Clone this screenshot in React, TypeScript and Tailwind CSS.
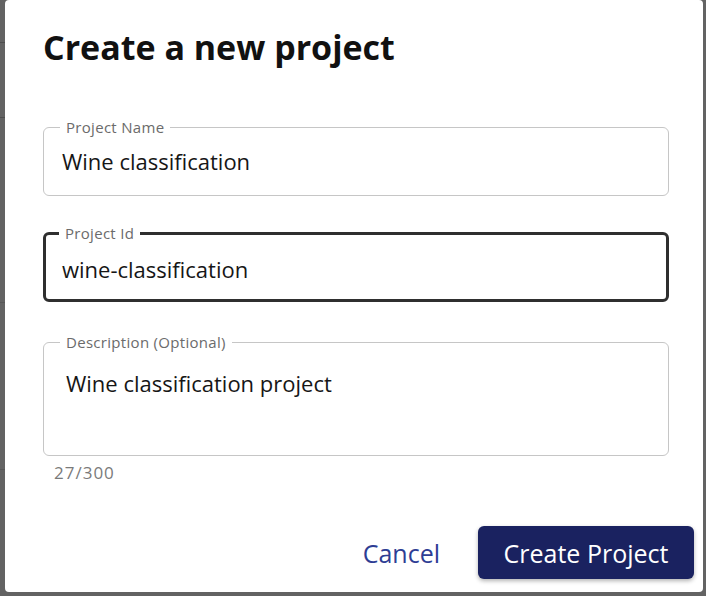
import React from "react";

const font = { fontFamily: "'Open Sans', Lato, sans-serif" };

function Field({
  label,
  value,
  focused,
  tall,
}: {
  label: string;
  value: string;
  focused?: boolean;
  tall?: boolean;
}) {
  return (
    <fieldset
      className={
        "m-0 min-w-0 rounded-[6px] " +
        (focused
          ? "border-[3px] border-[#2f2f2f] px-[16px]"
          : "border border-[#c6c6c6] px-[18px]") +
        (tall ? " h-[122px]" : " h-[77px]")
      }
    >
      <legend
        className={
          "px-[6px] text-[15px] leading-[16px] tracking-[0.3px] text-[#6b6b6b] " +
          (focused ? "-ml-[3px]" : "-ml-[2px]")
        }
      >
        {label}
      </legend>
      <div
        className={
          "text-[22px] leading-[28px] text-[#161616] " +
          (tall ? "mt-[19px] pl-[4px]" : focused ? "mt-[14px]" : "mt-[12px]")
        }
      >
        {value}
      </div>
    </fieldset>
  );
}

export default function App() {
  return (
    <div
      className="flex h-[596px] w-[706px] overflow-hidden bg-[#636363]"
      style={font}
    >
      <div className="flex w-[5px] shrink-0 flex-col">
        <div className="h-[43px] border-b border-[#4e4e4e]" />
        <div className="h-[75px] border-b border-[#4e4e4e]" />
        <div className="h-[185px] border-b border-[#575757]" />
        <div className="h-[167px] border-b border-[#575757]" />
      </div>
      <div className="flex h-[592px] w-[698px] shrink-0 flex-col rounded-[4px] bg-white">
        <h1 className="ml-[38px] mt-[27px] text-[34px] font-bold leading-[40px] text-[#111]">
          Create a new project
        </h1>
        <div className="ml-[38px] mr-[34px] mt-[52px] flex flex-col">
          <Field label="Project Name" value="Wine classification" />
          <div className="h-[29px]" />
          <Field label="Project Id" value="wine-classification" focused />
          <div className="h-[32px]" />
          <Field
            label="Description (Optional)"
            value="Wine classification project"
            tall
          />
          <div className="ml-[11px] mt-[7px] text-[17px] leading-[20px] tracking-[1px] text-[#7a7a7a]">
            27/300
          </div>
        </div>
        <div className="mr-[9px] mt-[43px] flex items-center justify-end gap-[38px]">
          <button className="text-[25px] leading-[30px] text-[#2e3d94]">
            Cancel
          </button>
          <button className="h-[53px] w-[216px] rounded-[6px] bg-[#1a2260] text-[25px] leading-[30px] text-white shadow-[0_2px_4px_rgba(0,0,0,0.3)]">
            Create Project
          </button>
        </div>
      </div>
    </div>
  );
}
